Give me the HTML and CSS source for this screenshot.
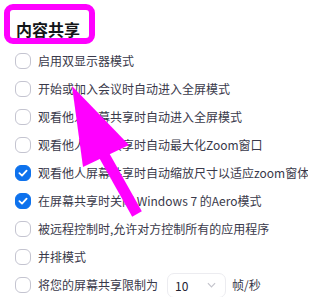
FILE: index.html
```html
<!DOCTYPE html>
<html lang="zh">
<head>
<meta charset="utf-8">
<link rel="stylesheet" href="styles.css">
</head>
<body>
<div class="panel">
  <h2 class="title">内容共享</h2>
  <ul class="list">
    <li class="row"><span class="cb"></span><span class="label">启用双显示器模式</span></li>
    <li class="row"><span class="cb"></span><span class="label">开始或加入会议时自动进入全屏模式</span></li>
    <li class="row"><span class="cb"></span><span class="label">观看他人屏幕共享时自动进入全屏模式</span></li>
    <li class="row"><span class="cb"></span><span class="label">观看他人屏幕共享时自动最大化Zoom窗口</span></li>
    <li class="row"><span class="cb on"><svg viewBox="0 0 16 16" width="16" height="16"><path d="M4.4 8.2 L7 10.6 L11.6 5.6" fill="none" stroke="#fff" stroke-width="1.8" stroke-linecap="round" stroke-linejoin="round"/></svg></span><span class="label">观看他人屏幕共享时自动缩放尺寸以适应zoom窗体</span></li>
    <li class="row"><span class="cb on"><svg viewBox="0 0 16 16" width="16" height="16"><path d="M4.4 8.2 L7 10.6 L11.6 5.6" fill="none" stroke="#fff" stroke-width="1.8" stroke-linecap="round" stroke-linejoin="round"/></svg></span><span class="label">在屏幕共享时关闭 Windows 7 的Aero模式</span></li>
    <li class="row"><span class="cb"></span><span class="label">被远程控制时,允许对方控制所有的应用程序</span></li>
    <li class="row"><span class="cb"></span><span class="label">并排模式</span></li>
    <li class="row"><span class="cb"></span><span class="label">将您的屏幕共享限制为</span>
      <span class="select"><span class="val">10</span><svg class="chev" viewBox="0 0 10 6" width="9" height="6"><path d="M1 1 L5 5 L9 1" fill="none" stroke="#c4c4cc" stroke-width="1.3"/></svg></span>
      <span class="label unit">帧/秒</span></li>
  </ul>
  <div class="highlight"></div>
  <svg class="arrow" width="308" height="297" viewBox="0 0 308 297">
    <line x1="100" y1="148" x2="137" y2="214" stroke="#ff00ff" stroke-width="11"/>
    <polygon points="72,86 83,167 129,145" fill="#ff00ff"/>
  </svg>
</div>
</body>
</html>
```
FILE: styles.css
```css
html, body {
  margin: 0;
  padding: 0;
  background: #ffffff;
}
body {
  width: 308px;
  height: 297px;
  overflow: hidden;
  font-family: "Noto Sans CJK SC", "Noto Sans", sans-serif;
  color: #232333;
}
.panel {
  position: relative;
  width: 308px;
  height: 297px;
}
.title {
  margin: 0;
  padding: 20px 0 0 16px;
  height: 27px;
  font-size: 16px;
  line-height: 18px;
  font-weight: 700;
  color: #131619;
  letter-spacing: 0;
}
.list {
  list-style: none;
  margin: 0;
  padding: 0 0 0 15px;
}
.row {
  display: flex;
  align-items: center;
  height: 28px;
  white-space: nowrap;
}
.cb {
  flex: none;
  box-sizing: border-box;
  width: 16px;
  height: 16px;
  border: 1px solid #c4c4d0;
  border-radius: 6px;
  background: #fff;
  margin-right: 7px;
  display: flex;
  align-items: center;
  justify-content: center;
}
.cb.on {
  background: #0e72ed;
  border-color: #0e72ed;
}
.cb svg {
  flex: none;
}
.label {
  font-size: 12px;
  line-height: 16px;
  color: #39394a;
}
.select {
  flex: none;
  box-sizing: border-box;
  display: flex;
  align-items: center;
  justify-content: space-between;
  width: 59px;
  height: 25px;
  margin-left: 9px;
  padding: 0 9px 0 7px;
  border: 1px solid #ececf0;
  border-radius: 7px;
  font-size: 12px;
  color: #232333;
}
.unit {
  margin-left: 6px;
}
.highlight {
  position: absolute;
  left: 4px;
  top: 4px;
  width: 91px;
  height: 40px;
  box-sizing: border-box;
  border: 6px solid #ff00ff;
  border-radius: 9px;
}
.arrow {
  position: absolute;
  left: 0;
  top: 0;
}
```
